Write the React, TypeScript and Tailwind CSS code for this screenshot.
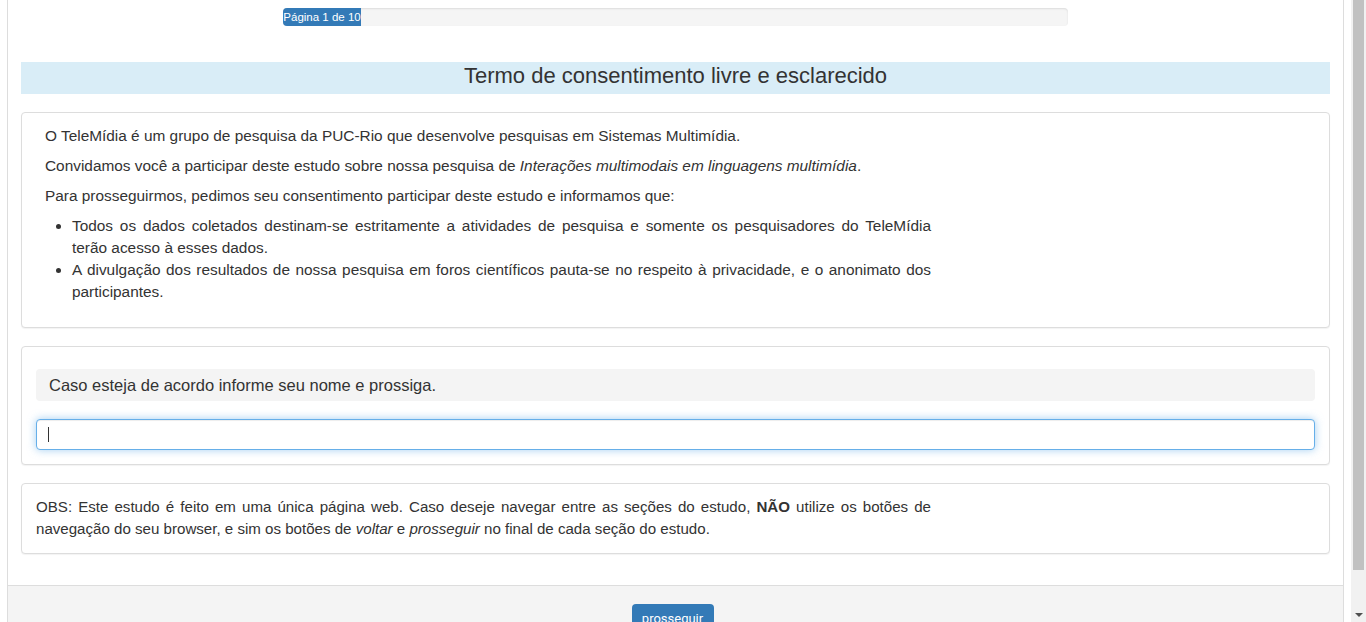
import React from "react";

export default function App() {
  return (
    <div className="flex h-[622px] w-[1366px] overflow-hidden bg-white text-[#333]" style={{ fontFamily: '"Liberation Sans", Arial, sans-serif' }}>
      <div className="flex w-[1351px] justify-center">
        <div className="flex w-[1337px] flex-col border-x border-[#ddd]">
          <div className="shrink-0 px-[13px] pt-[8px]">
            <div className="ml-[262px] flex h-[18px] w-[785px] overflow-hidden rounded bg-[#f5f5f5] shadow-[inset_0_1px_2px_rgba(0,0,0,0.1)]">
              <div className="flex w-[78px] items-center justify-center whitespace-nowrap bg-[#337ab7] text-[11.5px] leading-[18px] text-white">Página 1 de 10</div>
            </div>
          </div>
          <div className="mx-[13px] mt-[36px] flex h-[32px] shrink-0 items-start justify-center bg-[#d9edf7] pt-[1px] text-[22px] leading-[26px]">
            Termo de consentimento livre e esclarecido
          </div>
          <div className="mx-[13px] mt-[18px] shrink-0 rounded border border-[#ddd] bg-white px-[23px] pb-[24px] pt-[12px] text-[15.4px] leading-[22px] shadow-[0_1px_1px_rgba(0,0,0,0.05)]">
            <div className="w-[886px]">
              <p className="mb-[8px]">O TeleMídia é um grupo de pesquisa da PUC-Rio que desenvolve pesquisas em Sistemas Multimídia.</p>
              <p className="mb-[8px]">Convidamos você a participar deste estudo sobre nossa pesquisa de <i>Interações multimodais em linguagens multimídia</i>.</p>
              <p className="mb-[8px]">Para prosseguirmos, pedimos seu consentimento participar deste estudo e informamos que:</p>
              <ul className="list-disc pl-[27px] text-justify">
                <li>Todos os dados coletados destinam-se estritamente a atividades de pesquisa e somente os pesquisadores do TeleMídia terão acesso à esses dados.</li>
                <li>A divulgação dos resultados de nossa pesquisa em foros científicos pauta-se no respeito à privacidade, e o anonimato dos participantes.</li>
              </ul>
            </div>
          </div>
          <div className="mx-[13px] mt-[18px] shrink-0 rounded border border-[#ddd] bg-white px-[14px] pb-[14px] pt-[22px] shadow-[0_1px_1px_rgba(0,0,0,0.05)]">
            <div className="flex h-[32px] items-center rounded bg-[#f4f4f4] px-[13px] text-[16.5px]">
              Caso esteja de acordo informe seu nome e prossiga.
            </div>
            <div className="mt-[18px] flex h-[31px] items-center rounded border border-[#66afe9] bg-white px-[11px] shadow-[inset_0_1px_1px_rgba(0,0,0,0.075),0_0_8px_rgba(102,175,233,0.6)]">
              <div className="h-[15px] w-px bg-[#333]"></div>
            </div>
          </div>
          <div className="mx-[13px] mt-[18px] shrink-0 rounded border border-[#ddd] bg-white px-[14px] pb-[13px] pt-[12px] text-[15.1px] leading-[22px] shadow-[0_1px_1px_rgba(0,0,0,0.05)]">
            <p className="w-[895px] text-justify">
              OBS: Este estudo é feito em uma única página web. Caso deseje navegar entre as seções do estudo, <b>NÃO</b> utilize os botões de navegação do seu browser, e sim os botões de <i>voltar</i> e <i>prosseguir</i> no final de cada seção do estudo.
            </p>
          </div>
          <div className="mt-[31px] flex min-h-[60px] flex-1 shrink-0 justify-center border-t border-[#ddd] bg-[#f4f4f4] pr-[6px] pt-[18px]">
            <div className="flex h-[30px] w-[82px] justify-center rounded bg-[#337ab7] pt-[5px] text-[13px] text-white" style={{ fontFamily: 'Roboto, "Liberation Sans", sans-serif' }}>
              prosseguir
            </div>
          </div>
        </div>
      </div>
      <div className="flex w-[15px] flex-col bg-[#f1f1f1]">
        <div className="mx-[2px] h-[570px] shrink-0 bg-[#c1c1c1]"></div>
        <div className="flex flex-1 items-end justify-center pb-[5px]">
          <div className="h-0 w-0 border-x-[4px] border-t-[4px] border-x-transparent border-t-[#505050]"></div>
        </div>
      </div>
    </div>
  );
}
